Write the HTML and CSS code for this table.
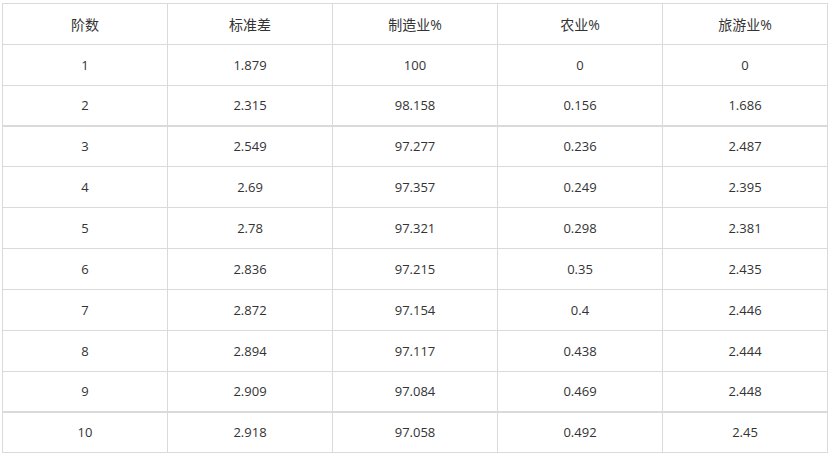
FILE: index.html
```html
<!DOCTYPE html>
<html lang="zh">
<head>
<meta charset="utf-8">
<link rel="stylesheet" href="styles.css">
</head>
<body>
<table class="grid">
  <thead>
    <tr><th>阶数</th><th>标准差</th><th>制造业%</th><th>农业%</th><th>旅游业%</th></tr>
  </thead>
  <tbody>
    <tr><td>1</td><td>1.879</td><td>100</td><td>0</td><td>0</td></tr>
    <tr class="thick"><td>2</td><td>2.315</td><td>98.158</td><td>0.156</td><td>1.686</td></tr>
    <tr><td>3</td><td>2.549</td><td>97.277</td><td>0.236</td><td>2.487</td></tr>
    <tr><td>4</td><td>2.69</td><td>97.357</td><td>0.249</td><td>2.395</td></tr>
    <tr><td>5</td><td>2.78</td><td>97.321</td><td>0.298</td><td>2.381</td></tr>
    <tr><td>6</td><td>2.836</td><td>97.215</td><td>0.35</td><td>2.435</td></tr>
    <tr><td>7</td><td>2.872</td><td>97.154</td><td>0.4</td><td>2.446</td></tr>
    <tr><td>8</td><td>2.894</td><td>97.117</td><td>0.438</td><td>2.444</td></tr>
    <tr class="thick"><td>9</td><td>2.909</td><td>97.084</td><td>0.469</td><td>2.448</td></tr>
    <tr><td>10</td><td>2.918</td><td>97.058</td><td>0.492</td><td>2.45</td></tr>
  </tbody>
</table>
</body>
</html>
```

FILE: styles.css
```css
html, body {
  margin: 0;
  padding: 0;
  background: #ffffff;
}
body {
  padding: 3px 0 0 2px;
  font-family: "Open Sans", "Noto Sans CJK SC", sans-serif;
  font-size: 13px;
  color: #333333;
}
.grid {
  border-collapse: collapse;
  width: 826px;
  table-layout: fixed;
}
.grid th,
.grid td {
  border: 1px solid #dadada;
  height: 41px;
  padding: 0;
  text-align: center;
  vertical-align: middle;
  font-weight: normal;
  box-sizing: border-box;
}
.grid th {
  font-size: 14px;
}
.grid tr.thick td {
  height: 40px;
  border-bottom: 2px solid #dadada;
}
```
